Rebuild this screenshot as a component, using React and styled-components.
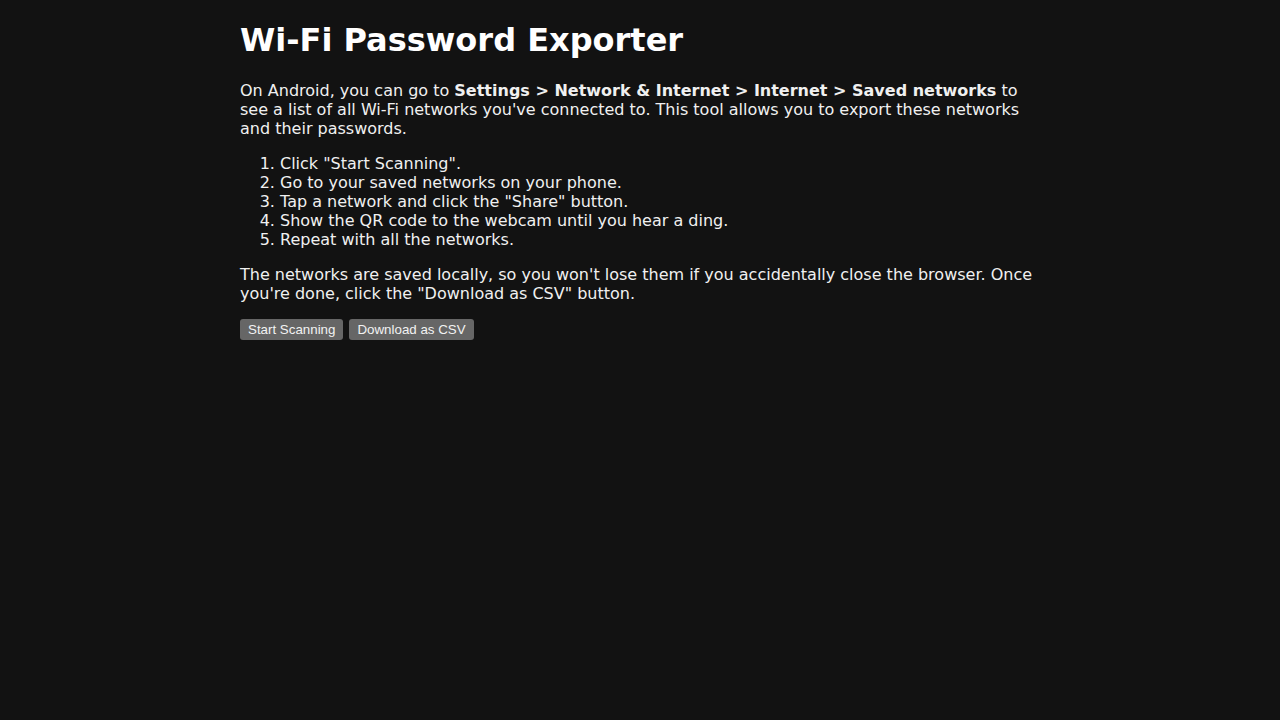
import React from 'react'
import styled, { createGlobalStyle } from 'styled-components'

const GlobalStyle = createGlobalStyle`
  html, body {
    background: #121212;
  }
  body {
    margin: 8px;
    color: #f0f0f0;
    font-family: "DejaVu Sans", sans-serif;
    font-size: 16px;
  }
`

const Main = styled.main`
  max-width: 800px;
  margin: 0 auto;
`

const Title = styled.h1`
  font-size: 32px;
  font-weight: bold;
  margin: 13px 0 22px;
  color: #fff;
`

const Text = styled.p`
  margin: 16px 0;
  line-height: normal;
`

const Steps = styled.ol`
  margin: 16px 0;
  padding-left: 40px;
`

const Actions = styled.div`
  display: flex;
  gap: 6px;
`

const Button = styled.button`
  font-family: "Liberation Sans", Arial, sans-serif;
  font-size: 13.33px;
  background: #666;
  color: #f2f2f2;
  border: none;
  border-radius: 3px;
  padding: 3px 8px;
  height: 21px;
  cursor: pointer;
`

export default function App() {
  return (
    <>
      <GlobalStyle />
      <Main>
        <Title>Wi-Fi Password Exporter</Title>
        <Text>
          On Android, you can go to <b>Settings &gt; Network &amp; Internet &gt; Internet &gt; Saved networks</b> to
          see a list of all Wi-Fi networks you've connected to. This tool allows you to export these networks and
          their passwords.
        </Text>
        <Steps>
          <li>Click "Start Scanning".</li>
          <li>Go to your saved networks on your phone.</li>
          <li>Tap a network and click the "Share" button.</li>
          <li>Show the QR code to the webcam until you hear a ding.</li>
          <li>Repeat with all the networks.</li>
        </Steps>
        <Text>
          The networks are saved locally, so you won't lose them if you accidentally close the browser. Once you're
          done, click the "Download as CSV" button.
        </Text>
        <Actions>
          <Button>Start Scanning</Button>
          <Button>Download as CSV</Button>
        </Actions>
      </Main>
    </>
  )
}
